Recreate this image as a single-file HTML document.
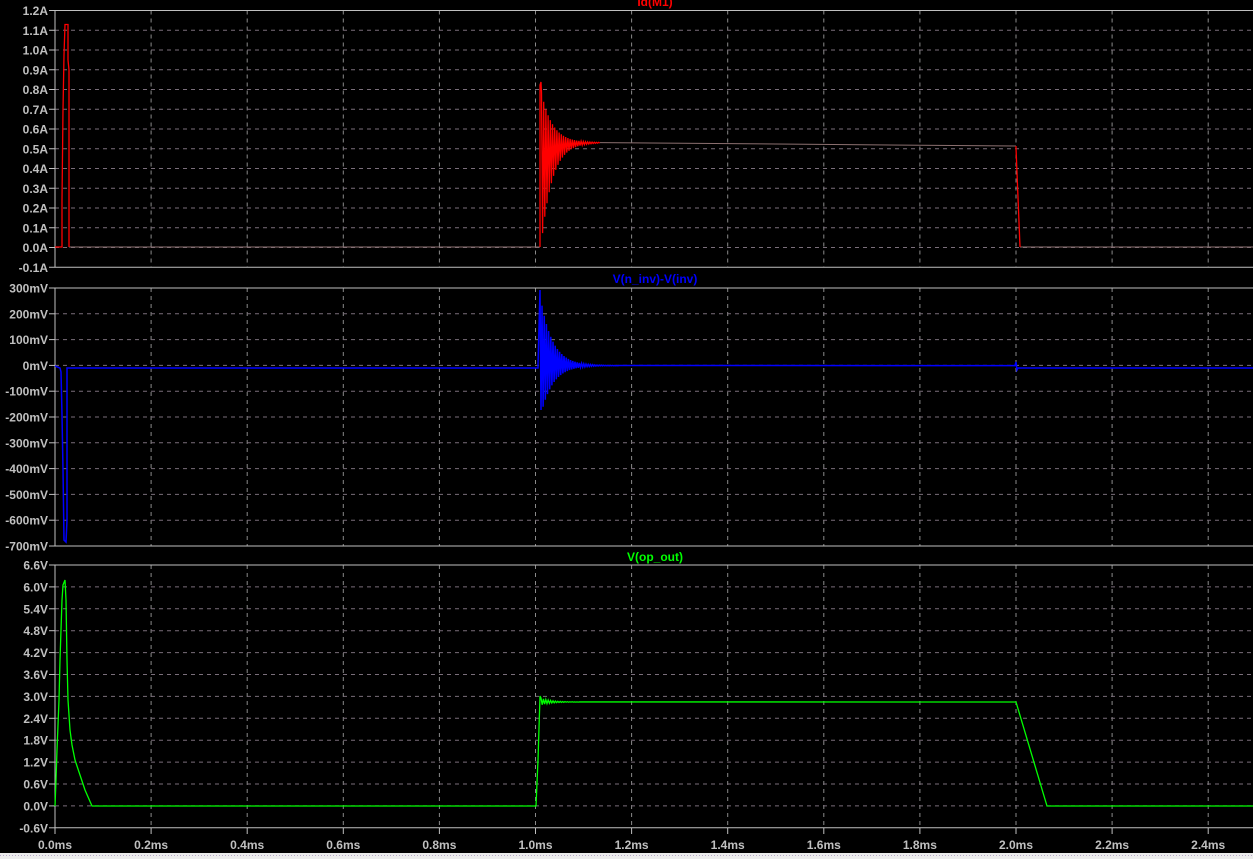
<!DOCTYPE html>
<html><head><meta charset="utf-8"><style>
html,body{margin:0;padding:0;background:#000;width:1253px;height:859px;overflow:hidden}
svg{display:block}
text{font-family:"Liberation Sans",sans-serif;font-weight:bold;font-size:12px}
</style></head><body>
<svg id="s" width="1253" height="859" xmlns="http://www.w3.org/2000/svg">
<rect width="1253" height="859" fill="#000"/>
<g id="grid"></g>
<path id="redflat" fill="none" stroke="#8c7070" stroke-width="1"/>
<path id="red" fill="none" stroke="#ff0000" stroke-width="1.3"/>
<path id="blue" fill="none" stroke="#0000ff" stroke-width="1.5"/>
<path id="green" fill="none" stroke="#00ff00" stroke-width="1.3"/>
<text x="655" y="6" fill="#ff0000" text-anchor="middle">Id(M1)</text>
<text x="655" y="283" fill="#0000ff" text-anchor="middle">V(n_inv)-V(inv)</text>
<text x="655" y="561" fill="#00ff00" text-anchor="middle">V(op_out)</text>
<rect x="0" y="853" width="1253" height="6" fill="#ececec"/>
<line x1="0" y1="855.5" x2="1253" y2="855.5" stroke="#b8a8c8" stroke-dasharray="1,2"/>
</svg>
<script>
var g=document.getElementById('grid'),h='';
var X0=55,DX=96.1;
var panes=[
 {top:10.5,labels:['1.2A','1.1A','1.0A','0.9A','0.8A','0.7A','0.6A','0.5A','0.4A','0.3A','0.2A','0.1A','0.0A','-0.1A'],step:19.75},
 {top:288,labels:['300mV','200mV','100mV','0mV','-100mV','-200mV','-300mV','-400mV','-500mV','-600mV','-700mV'],step:25.8},
 {top:565,labels:['6.6V','6.0V','5.4V','4.8V','4.2V','3.6V','3.0V','2.4V','1.8V','1.2V','0.6V','0.0V','-0.6V'],step:21.9}];
panes.forEach(function(p){
 var bot=p.top+p.step*(p.labels.length-1);
 for(var k=1;k<13;k++){var x=X0+k*DX;h+='<line x1="'+x+'" y1="'+p.top+'" x2="'+x+'" y2="'+bot+'" stroke="#8a8a8a" stroke-dasharray="4,4"/>';}
 p.labels.forEach(function(l,i){var y=p.top+i*p.step;
  if(i>0&&i<p.labels.length-1)h+='<line x1="'+X0+'" y1="'+y+'" x2="1253" y2="'+y+'" stroke="#7a6e7a" stroke-dasharray="4,4"/>';
  h+='<line x1="49" y1="'+y+'" x2="'+X0+'" y2="'+y+'" stroke="#c0c0c0"/>';
  h+='<text x="48" y="'+(y+4.5)+'" fill="#c0c0c0" text-anchor="end">'+l+'</text>';});
 h+='<line x1="'+X0+'" y1="'+p.top+'" x2="1253" y2="'+p.top+'" stroke="#c0c0c0"/>';
 h+='<line x1="'+X0+'" y1="'+bot+'" x2="1253" y2="'+bot+'" stroke="#c0c0c0"/>';
 h+='<line x1="'+X0+'" y1="'+p.top+'" x2="'+X0+'" y2="'+bot+'" stroke="#c0c0c0"/>';
});
for(var k=0;k<13;k++){var x=X0+k*DX;h+='<line x1="'+x+'" y1="828" x2="'+x+'" y2="834" stroke="#c0c0c0"/>';
 h+='<text x="'+x+'" y="849" fill="#c0c0c0" text-anchor="middle">'+(k*0.2).toFixed(1)+'ms</text>';}
g.innerHTML=h;
function ring(x0,x1,base,up,dn,tau,st){var d='';for(var x=x0,i=0;x<x1;x+=st,i++){var e=Math.exp(-(x-x0)/tau);d+=' L'+x.toFixed(1)+' '+(base+(i%2?dn*e:-up*e)).toFixed(1);}return d;}
document.getElementById('redflat').setAttribute('d','M69 247 L540 247 M600 142.6 L1016 146 M1020 247 L1253 247');
var r='M55 247 L62 247 L62 200 L63 110 L64 55 L65 24.5 L68 24.5 L68 60 L69 70 L69 247 M540 247 L540 85 L541 82';
r+=ring(541.5,600,142.6,50,100,11,1.1)+' M1016 146 L1016 148 L1020 247';
document.getElementById('red').setAttribute('d',r);
var b='M55 366 L60 368 L61 372 L62 415 L63 470 L64 540 L66 542 L67 520 L67 368 L538 368 L538 365 L540 290 L541 410';
b+=ring(542,620,365.6,60,45,12,1.1)+' L1015 365.6 L1016 362 L1017 370 L1018 368 L1253 368';
document.getElementById('blue').setAttribute('d',b);
var gr='M55 806 L56 780 L57 750 L59 700 L60 660 L62 600 L63 585 L65 580 L66 600 L67 660 L68 700 L70 730 L72 745 L75 760 L80 775 L85 790 L92 806 L536 806 L538 760 L540 696'+ring(541,580,702,4,3,10,1.2)+' L1016 702 L1047 806 L1253 806';
document.getElementById('green').setAttribute('d',gr);
</script>
</body></html>
